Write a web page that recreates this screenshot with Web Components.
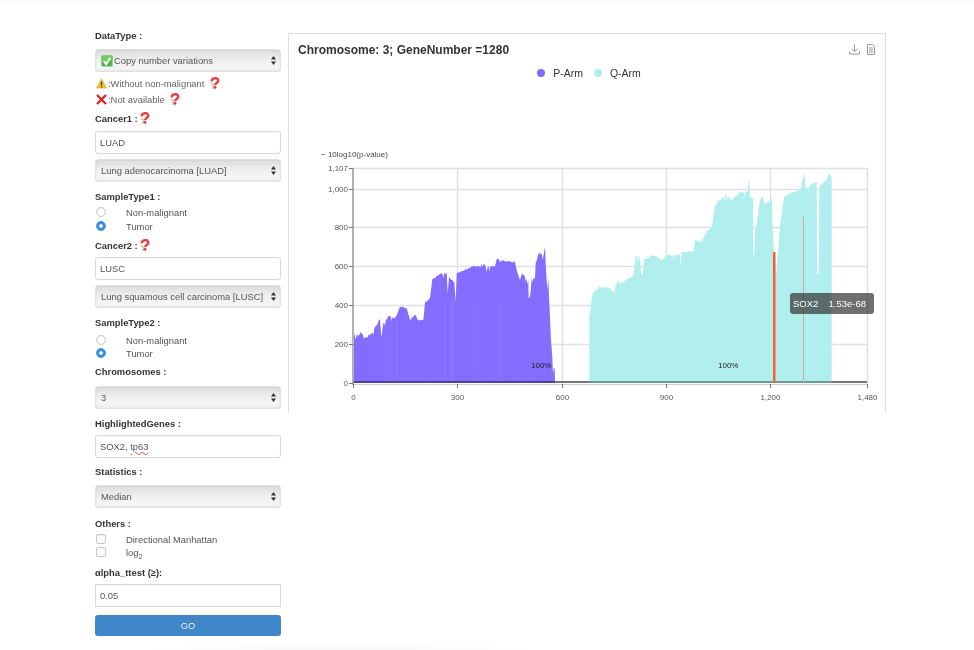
<!DOCTYPE html>
<html><head><meta charset="utf-8"><title>Chromosome</title>
<style>
html,body{margin:0;background:#fff}
body{font:9.4px/13px "Liberation Sans",Arial,sans-serif;color:#555;width:974px;height:650px;overflow:hidden}
</style></head><body>
<template id="q-tpl"><svg width="11" height="13" viewBox="0 0 13 15"><path d="M3.2 5 C3 1 10.500 -.5 11 3.800 C11.300 6.500 7.500 6.500 7.300 9.500" fill="none" stroke="#e5434c" stroke-width="3"/><circle cx="7" cy="12" r="1.800" fill="#e5434c"/><path d="M2 7.500 L5 9 L4.500 14 M7 13 L8 15" fill="none" stroke="#cfae95" stroke-width="1.400"/></svg></template>

<app-shell>
  <side-form>
    <bio-field label="DataType :" top="29" gap="7"><bio-select><emoji-icon kind="check"></emoji-icon>Copy number variations</bio-select></bio-field>
    <note-row style="margin-top:5px"><emoji-icon kind="warn"></emoji-icon>:Without non-malignant <help-icon></help-icon></note-row>
    <note-row style="margin-top:3px"><emoji-icon kind="cross"></emoji-icon>:Not available <help-icon></help-icon></note-row>
    <bio-field label="Cancer1 :" help top="6" gap="6"><bio-input>LUAD</bio-input></bio-field>
    <bio-select style="margin-top:5px">Lung adenocarcinoma [LUAD]</bio-select>
    <bio-field label="SampleType1 :" top="8" gap="3">
      <bio-check round>Non-malignant</bio-check><bio-check round checked>Tumor</bio-check>
    </bio-field>
    <bio-field label="Cancer2 :" help top="6" gap="5"><bio-input>LUSC</bio-input></bio-field>
    <bio-select style="margin-top:5px">Lung squamous cell carcinoma [LUSC]</bio-select>
    <bio-field label="SampleType2 :" top="8" gap="4.5">
      <bio-check round>Non-malignant</bio-check><bio-check round checked>Tumor</bio-check>
    </bio-field>
    <bio-field label="Chromosomes :" top="4" gap="8"><bio-select>3</bio-select></bio-field>
    <bio-field label="HighlightedGenes :" top="8" gap="5"><bio-input>SOX2, <u>tp63</u></bio-input></bio-field>
    <bio-field label="Statistics :" top="7" gap="7"><bio-select>Median</bio-select></bio-field>
    <bio-field label="Others :" top="9" gap="3">
      <bio-check>Directional Manhattan</bio-check><bio-check>log<sub>2</sub></bio-check>
    </bio-field>
    <bio-field label="αlpha_ttest (≥):" top="6" gap="5"><bio-input square>0.05</bio-input></bio-field>
    <bio-button>GO</bio-button>
  </side-form>
  <chart-panel></chart-panel>
</app-shell>

<script>
function def(name, css, html, init){
  customElements.define(name, class extends HTMLElement{
    constructor(){super();this.attachShadow({mode:'open'});}
    connectedCallback(){
      this.shadowRoot.innerHTML='<style>'+css+'</style>'+(typeof html==='function'?html(this):html);
      if(init)init(this);
    }
  });
}
const qIcon=()=>document.getElementById('q-tpl').innerHTML;
const EMO={
 check:'<svg width="12" height="12" viewBox="0 0 13 13"><rect x=".5" y=".5" width="12" height="12" rx="1.5" fill="#4fb548"/><rect x=".5" y=".5" width="12" height="6" rx="1.5" fill="#6fca62"/><path d="M3 6.500 L5.500 10 L10 3" fill="none" stroke="#fff" stroke-width="2.200"/></svg>',
 warn:'<svg width="11" height="11" viewBox="0 0 12 12"><path d="M6 .8 L11.500 11 L.5 11 Z" fill="#f2c230" stroke="#d8a520" stroke-width=".6"/><path d="M6 4 V8" stroke="#4a3a10" stroke-width="1.500"/><circle cx="6" cy="9.500" r=".8" fill="#4a3a10"/></svg>',
 cross:'<svg width="11" height="11" viewBox="0 0 11 11"><path d="M1 1 L10 10 M10 1 L1 10" stroke="#d8262c" stroke-width="2.400"/></svg>'
};
def('app-shell',`:host{display:flex;align-items:flex-start;padding:0 0 0 95px;gap:7px;box-sizing:border-box;height:650px;filter:blur(.5px);
 background:linear-gradient(#fafafa,#fafafa) 0 0/100% 3px no-repeat,radial-gradient(ellipse 210px 6px at 340px 650px,#f7f7f7,#fff) 0 0/100% 100% no-repeat}`,'<slot></slot>');
def('side-form',':host{display:flex;flex-direction:column;width:186px;flex:none}','<slot></slot>');
def('bio-field',':host{display:flex;flex-direction:column}.l{font-weight:700;color:#333;line-height:13px;display:flex;align-items:center;height:13px;white-space:pre}svg{margin-left:1px;margin-top:-1px}',
 e=>'<div class="l">'+e.getAttribute('label')+(e.hasAttribute('help')?qIcon():'')+'</div><div class="b" style="margin-top:'+e.getAttribute('gap')+'px;display:flex;flex-direction:column"><slot></slot></div>',
 e=>{e.style.marginTop=e.getAttribute('top')+'px'});
def('bio-select',`:host{display:flex;align-items:center;height:23px;box-sizing:border-box;border:1px solid #e0e0e0;border-radius:3px;padding-left:5px;padding-right:4px;background:linear-gradient(#dcdcdc,#ececec 40%,#f5f5f5 75%,#f1f1f1);box-shadow:inset 0 0 2px rgba(0,0,0,.1);color:#555;white-space:nowrap}
 .t{flex:1;display:flex;align-items:center}svg{flex:none}`,
 '<div class="t"><slot></slot></div><svg width="5" height="9" viewBox="0 0 5 9"><path d="M2.500 0 L5 3.500 H0Z M2.500 9 L5 5.500 H0Z" fill="#333"/></svg>');
def('bio-input',`:host{display:flex;align-items:center;height:23px;box-sizing:border-box;border:1px solid #d8d8d8;border-radius:3px;padding-left:4px;background:#fff;color:#555;box-shadow:inset 0 1px 1px rgba(0,0,0,.04)}
 :host([square]){border-radius:0}::slotted(u){text-decoration:underline wavy #e44;text-decoration-thickness:1px}`,'<span><slot></slot></span>');
def('bio-check',`:host{display:flex;align-items:center;height:13.5px;white-space:nowrap}
 i{width:8px;height:8px;flex:none;margin:0 20px 1px 1px;border:1px solid #c8c8c8;border-radius:2px;background:#fdfdfd;box-shadow:inset 0 1px 1px rgba(0,0,0,.06)}
 :host([round]) i{border-radius:50%}
 :host([checked]) i{border-color:#3a8fe8;background:radial-gradient(circle,#fff 0 1.4px,#3a8fe8 2.2px)}
 ::slotted(sub){font-size:7px;line-height:0}`,'<i></i><span><slot></slot></span>');
def('bio-button',':host{display:flex;align-items:center;justify-content:center;height:21px;margin-top:8px;border-radius:3px;background:#3f87c9;color:#e8f0f8;box-sizing:border-box}','<slot></slot>');
def('note-row',':host{display:flex;align-items:center;height:13px;color:#666;white-space:pre}::slotted(help-icon){margin-left:2px}::slotted(emoji-icon){margin:0 1px 0 1px}','<slot></slot>');
def('emoji-icon',':host{display:inline-flex;flex:none;margin-right:1px}','',e=>{e.shadowRoot.innerHTML+=EMO[e.getAttribute('kind')]});
def('help-icon',':host{display:inline-flex;flex:none}',()=>qIcon());

def('chart-tooltip',`:host{position:absolute;left:501px;top:259px;width:84px;height:21px;box-sizing:border-box;background:rgba(50,50,50,.7);border-radius:3px;color:#fff;display:flex;justify-content:space-between;align-items:center;padding:0 8px 0 3px;font-size:9.5px;white-space:nowrap}`,'<slot></slot>');

def('chart-panel',`:host{display:block;position:relative;width:598px;height:380px;margin-top:33px;box-sizing:border-box;border:solid #dedede;border-width:1px 1px 0 1px;flex:none}
 .title{font-size:12px;font-weight:700;color:#333;padding:9px 0 0 9px;line-height:14px}
 .tools{position:absolute;right:9px;top:10px;display:flex;gap:6px}
 .legend{display:flex;justify-content:center;gap:11px;margin-top:9px;padding-left:4px;font-size:10.5px;color:#333;line-height:14px}
 .legend span{display:flex;align-items:center;gap:8px}.legend i{width:8px;height:8px;border-radius:50%}
 svg.c{position:absolute;left:0;top:0}
`,`<div class="title">Chromosome: 3; GeneNumber =1280</div>
<div class="tools"><svg width="11" height="11" viewBox="0 0 11 11" fill="none" stroke="#999"><path d="M5.500 .5V7.500M2.500 4.700L5.500 7.700L8.500 4.700M.5 7.500V10H10.500V7.500"/></svg><svg width="10" height="11" viewBox="0 0 10 11" fill="none" stroke="#999"><path d="M1.500 .5H6.500L8.500 2.500V10.500H1.500ZM3 4H7M3 6H7M3 8H7"/></svg></div>
<div class="legend"><span><i style="background:#7f6cff"></i>P-Arm</span><span><i style="background:#b0eeee"></i>Q-Arm</span></div>
<svg class="c" id="c" width="596" height="379"></svg>
<chart-tooltip><span>SOX2</span><span>1.53e-68</span></chart-tooltip>`,
e=>{
 const OX=289,OY=34;
 const X=v=>353+v*0.3475, Y=v=>383-v*0.1945;
 const pz=[[117,310],[130,318],[138,305],[148,325],[170,310],[178,295],[195,268],[199,322],[205,280],[220,258],[240,265],[255,230],[275,235],[285,270],[300,255],[310,270],[325,270],[330,218],[345,205],[352,148],[375,132],[395,130],[398,190],[402,142],[418,155],[422,215],[425,130],[450,120],[470,110],[510,103],[515,125],[518,110],[540,108],[545,88],[600,97],[605,120],[615,150],[622,130],[640,150],[641,205],[645,200],[650,145],[660,145],[662,100],[670,72],[680,70],[683,90],[690,50],[693,120],[697,180],[700,145],[703,220],[708,330],[712,380],[714,430],[716,415],[719,415],[720,458]];
 const qz=[[58,460],[68,400],[90,380],[120,385],[128,395],[145,360],[155,370],[190,345],[197,290],[210,290],[213,340],[218,345],[222,300],[250,285],[275,300],[290,285],[330,285],[332,320],[335,275],[370,275],[375,240],[395,245],[410,212],[425,205],[437,128],[470,105],[485,120],[510,97],[530,95],[538,55],[540,110],[549,115],[550,285],[553,285],[556,210],[570,120],[578,108],[585,135],[605,112],[608,210],[612,270],[618,350],[630,200],[642,110],[660,100],[690,90],[703,40],[707,85],[740,62],[741,340],[746,340],[748,75],[765,65],[778,40],[785,50]];
 let seed=11;const rnd=()=>(seed=(seed*16807)%2147483647)/2147483647;
 const fine=(pts,conv,amp)=>{const o=[];for(let i=0;i<pts.length;i++){const [a,b]=conv(pts[i]);o.push([a,b]);if(i+1<pts.length){const [c,d]=conv(pts[i+1]);const n=Math.floor((c-a)/.8);for(let k=1;k<n;k++){let dip=rnd()<.07?rnd()*6:0;o.push([a+(c-a)*k/n,b+(d-b)*k/n+(rnd()-.5)*amp+dip]);}}}return o;};
 const P=fine(pz,p=>[315+p[0]/3,230+p[1]/3],2);
 const Q=fine(qz,p=>[570+p[0]/3,160+p[1]/3],1.8);
 const poly=(a,fill)=>{const s=a[0][0],t=a[a.length-1][0];return '<path fill="'+fill+'" d="M'+(s-OX)+' '+(383-OY)+a.map(p=>'L'+(p[0]-OX).toFixed(1)+' '+(p[1]-OY).toFixed(1)).join('')+'L'+(t-OX)+' '+(383-OY)+'Z"/>';};
 let g='';
 const grid='#e0e0e0',txt='#555',ff='font-family="Liberation Sans,Arial,sans-serif"';
 [200,400,600,800,1000,1107].forEach(v=>{g+=`<path d="M${353-OX} ${Math.round(Y(v))-OY+.5}H${867-OX}" stroke="${grid}" stroke-width="1.5"/>`});
 [300,600,900,1200].forEach(v=>{g+=`<path d="M${Math.round(X(v))-OX+.5} ${168-OY}V${383-OY}" stroke="${grid}" stroke-width="1.5"/>`});
 g+=`<path d="M${867-OX+.5} ${168-OY}V${384-OY}" stroke="${grid}" stroke-width="1.5"/>`;
 g+=poly(P,'#846cff')+poly(Q,'#b1efef');
 for(let i=0;i<26;i++){const x=355+rnd()*198;g+=`<path d="M${(x-OX).toFixed(1)} ${300-OY}V${381-OY}" stroke="#fff" stroke-opacity=".05" stroke-width="1"/>`}
 g+=`<rect x="${353-OX}" y="${381-OY}" width="514" height="2" fill="#777"/>`;
 g+=`<rect x="${353-OX}" y="${381-OY}" width="${P[P.length-1][0]-353}" height="2" fill="#50419e"/>`;
 g+=`<rect x="${Q[0][0]-OX}" y="${381-OY}" width="${Q[Q.length-1][0]-Q[0][0]}" height="2" fill="#6e9a9a"/>`;
 g+=`<path d="M${353-OX} ${384-OY+.5}H${868-OX}" stroke="#ccc"/>`;
 g+=`<path d="M${353-OX} ${168-OY}V${385-OY}" stroke="#999" stroke-width="1.5"/>`;
 [0,200,400,600,800,1000,1107].forEach(v=>{const y=Math.round(Y(v))-OY+.5;g+=`<path d="M${349-OX} ${y}H${353-OX}" stroke="#777"/><text ${ff} x="${348-OX}" y="${y+2.5}" text-anchor="end" font-size="8" fill="${txt}">${v.toLocaleString('en-US')}</text>`});
 [0,300,600,900,1200,1480].forEach(v=>{const x=Math.round(X(v))-OX+.5;g+=`<path d="M${x} ${384-OY}V${388-OY}" stroke="#777"/><text ${ff} x="${x}" y="${400-OY}" text-anchor="middle" font-size="8" fill="${txt}">${v.toLocaleString('en-US')}</text>`});
 g+=`<text ${ff} x="${321-OX}" y="${157-OY}" font-size="8" fill="#444">− 10log10(p-value)</text>`;
 g+=`<text ${ff} x="${531-OX}" y="${368-OY}" font-size="8" fill="#222">100%</text><text ${ff} x="${718-OX}" y="${368-OY}" font-size="8" fill="#222">100%</text>`;
 g+=`<rect x="${773-OX}" y="${252-OY}" width="2.5" height="131" fill="#ff5c26"/>`;
 g+=`<rect x="${803-OX}" y="${217-OY}" width="1" height="166" fill="#d6a998"/>`;
 e.shadowRoot.getElementById('c').innerHTML=g;
});
</script>
</body></html>
